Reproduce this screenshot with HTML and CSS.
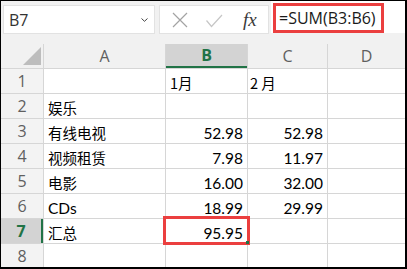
FILE: index.html
```html
<!DOCTYPE html>
<html>
    <head>
        <title>汇总</title>
        <meta charset="UTF-8">
        <link rel="stylesheet" href="styles.css">
    </head>
    <body>
        <div class="sheet">
            <div class="toolbar">
                <div class="namebox">
                    <span>B7</span>
                    <svg class="chev" width="7" height="4" viewBox="0 0 7 4"><polyline points="0.5,0.5 3.5,3.3 6.5,0.5" fill="none" stroke="#444" stroke-width="1"/></svg>
                </div>
                <div class="fbtns">
                    <svg class="ico-x" width="16" height="16" viewBox="0 0 16 16"><path d="M1 1 L15 15 M15 1 L1 15" stroke="#a3a3a3" stroke-width="1.2" fill="none"/></svg>
                    <svg class="ico-ok" width="18" height="16" viewBox="0 0 18 16"><polyline points="1.5,8.5 6.5,14.5 17,3" fill="none" stroke="#c6c6c6" stroke-width="1.2"/></svg>
                    <span class="fx">fx</span>
                </div>
                <div class="formula">
                    <span class="mark">=SUM(B3:B6)</span>
                </div>
            </div>

            <div class="grid">
                <div class="corner"><svg width="18" height="18" viewBox="0 0 18 18"><polygon points="18,0 18,18 0,18" fill="#bdbdbd"/></svg></div>
                <div class="colhdr">A</div>
                <div class="colhdr active">B</div>
                <div class="colhdr">C</div>
                <div class="colhdr">D</div>

                <div class="rowhdr">1</div>
                <div class="cell"></div>
                <div class="cell zh">1月</div>
                <div class="cell zh c-left">2 月</div>
                <div class="cell"></div>

                <div class="rowhdr">2</div>
                <div class="cell zh">娱乐</div>
                <div class="cell"></div>
                <div class="cell"></div>
                <div class="cell"></div>

                <div class="rowhdr">3</div>
                <div class="cell zh">有线电视</div>
                <div class="cell num">52.98</div>
                <div class="cell num">52.98</div>
                <div class="cell"></div>

                <div class="rowhdr">4</div>
                <div class="cell zh">视频租赁</div>
                <div class="cell num">7.98</div>
                <div class="cell num">11.97</div>
                <div class="cell"></div>

                <div class="rowhdr">5</div>
                <div class="cell zh">电影</div>
                <div class="cell num">16.00</div>
                <div class="cell num">32.00</div>
                <div class="cell"></div>

                <div class="rowhdr">6</div>
                <div class="cell">CDs</div>
                <div class="cell num">18.99</div>
                <div class="cell num">29.99</div>
                <div class="cell"></div>

                <div class="rowhdr active">7</div>
                <div class="cell zh">汇总</div>
                <div class="cell num selected">95.95<span class="handle"></span></div>
                <div class="cell"></div>
                <div class="cell"></div>

                <div class="rowhdr">8</div>
                <div class="cell"></div>
                <div class="cell"></div>
                <div class="cell"></div>
                <div class="cell"></div>
            </div>
        </div>
    </body>
</html>
```

FILE: styles.css
```css
body
{
	margin:0px;
	padding:0px;
	background-color:white;
}

.sheet
{
	box-sizing:border-box;
	width:407px;
	height:269px;
	border-style:solid;
	border-color:black;
	border-width:1px 2px 2px 1px;
	overflow:hidden;
	font-family:"Open Sans", sans-serif;
}

/* formula bar */

.toolbar
{
	display:flex;
	align-items:flex-start;
	height:43px;
	background-color:#f1f1f1;
}

.namebox
{
	box-sizing:border-box;
	display:flex;
	align-items:center;
	justify-content:space-between;
	width:152px;
	height:29px;
	margin:4px 0 0 2px;
	padding:0 6px 0 5px;
	background-color:white;
	border:1px solid #e2e2e2;
	font-size:16px;
	color:#333;
}

.chev
{
	margin-top:1px;
}

.fbtns
{
	box-sizing:border-box;
	display:flex;
	align-items:center;
	width:110px;
	height:29px;
	margin:4px 0 0 4px;
	background-color:white;
	border:1px solid #e2e2e2;
}

.ico-x
{
	margin-left:12px;
}

.ico-ok
{
	margin-left:17px;
	margin-top:1px;
}

.fx
{
	margin-left:20px;
	font-family:"Liberation Serif", serif;
	font-style:italic;
	font-size:19px;
	color:#3a3a3a;
}

.formula
{
	flex:1;
	height:32px;
	margin-left:2px;
	padding:2px 0 0 2px;
	box-sizing:border-box;
	background-color:white;
}

.mark
{
	display:inline-block;
	box-sizing:border-box;
	width:111px;
	height:30px;
	padding-left:3px;
	border:3px solid #eb3f3f;
	font-size:16px;
	line-height:24px;
	color:#1a1a1a;
}

/* cells */

.grid
{
	display:grid;
	grid-template-columns:42px 121px 81px 79px 77px;
	grid-template-rows:24px repeat(8, 24px);
	gap:1px;
	background-color:#d6d6d6;
}

.corner
{
	display:flex;
	align-items:flex-end;
	justify-content:flex-end;
	padding:0 2px 3px 0;
	background-color:#f1f1f1;
}

.colhdr
{
	box-sizing:border-box;
	text-align:center;
	font-size:16px;
	line-height:24px;
	color:#5f5f5f;
	background-color:#f1f1f1;
}

.colhdr.active
{
	background-color:#d3d3d3;
	border-bottom:2px solid #217346;
	line-height:22px;
	font-weight:bold;
	color:#217346;
}

.rowhdr
{
	box-sizing:border-box;
	text-align:center;
	font-size:16px;
	line-height:24px;
	color:#5f5f5f;
	background-color:#f3f3f3;
}

.rowhdr.active
{
	background-color:#d3d3d3;
	border-right:2px solid #217346;
	font-weight:bold;
	color:#217346;
}

.cell
{
	display:flex;
	align-items:flex-end;
	padding:0 4px 1px 4px;
	background-color:white;
	font-family:Lato, "Noto Sans CJK SC", sans-serif;
	font-size:15.5px;
	line-height:18px;
	color:black;
	white-space:nowrap;
}

.cell.zh
{
	font-family:"Noto Sans CJK SC", sans-serif;
	font-size:14.5px;
}

.cell.c-left
{
	padding-left:2px;
}

.cell.num
{
	justify-content:flex-end;
}

.selected
{
	position:relative;
}

.selected::after
{
	content:"";
	position:absolute;
	left:-3px;
	top:-3px;
	right:-3px;
	bottom:-2px;
	border:3px solid #eb3f3f;
}

.handle
{
	position:absolute;
	right:-2px;
	bottom:-1px;
	width:3px;
	height:3px;
	background-color:#217346;
	z-index:2;
}
```
